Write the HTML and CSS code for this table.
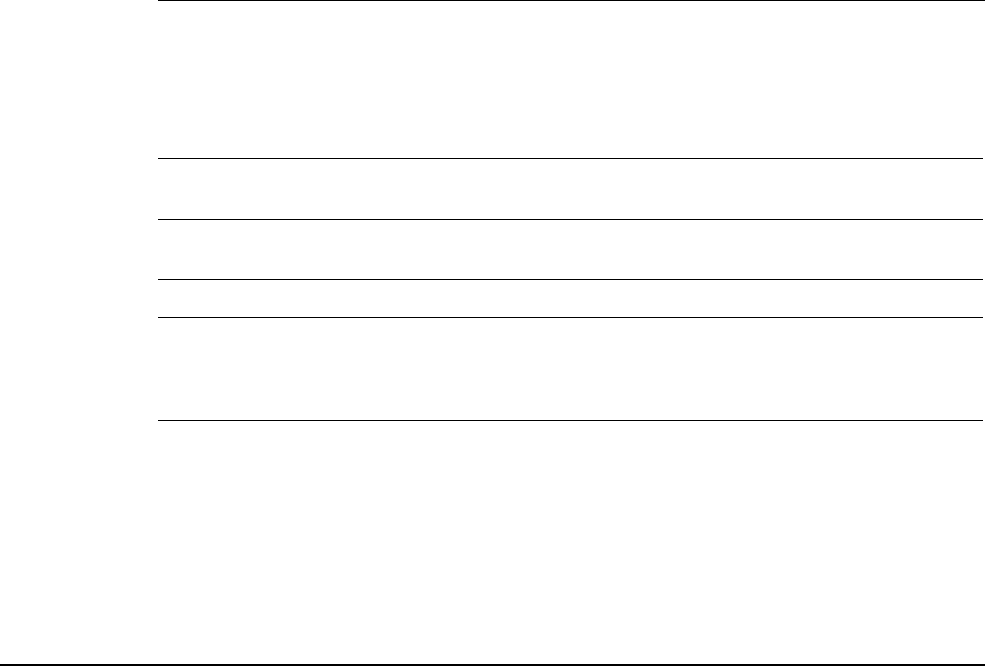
FILE: index.html
```html
<!DOCTYPE html>
<html>
<head>
<meta charset="utf-8">
<link rel="stylesheet" href="styles.css">
</head>
<body>
<div class="page">
  <div class="list">
    <div class="row row-a"></div>
    <div class="row row-b"></div>
    <div class="row row-c"></div>
    <div class="row row-d"></div>
    <div class="row row-e"></div>
  </div>
  <div class="spacer"></div>
  <div class="footer"></div>
</div>
</body>
</html>
```
FILE: styles.css
```css
* { box-sizing: border-box; }
html, body { margin: 0; padding: 0; background: #fff; font-family: "Liberation Sans", Arial, sans-serif; }
.page { height: 666px; display: flex; flex-direction: column; }
.list { margin-left: 158px; border-top: 1px solid #000; }
.row { margin-right: 2px; border-bottom: 1px solid #000; }
.row-a { height: 158px; }
.row-b { height: 61px; }
.row-c { height: 60px; }
.row-d { height: 38px; }
.row-e { height: 103px; }
.spacer { height: 243px; }
.footer { border-top: 2px solid #000; }
```
